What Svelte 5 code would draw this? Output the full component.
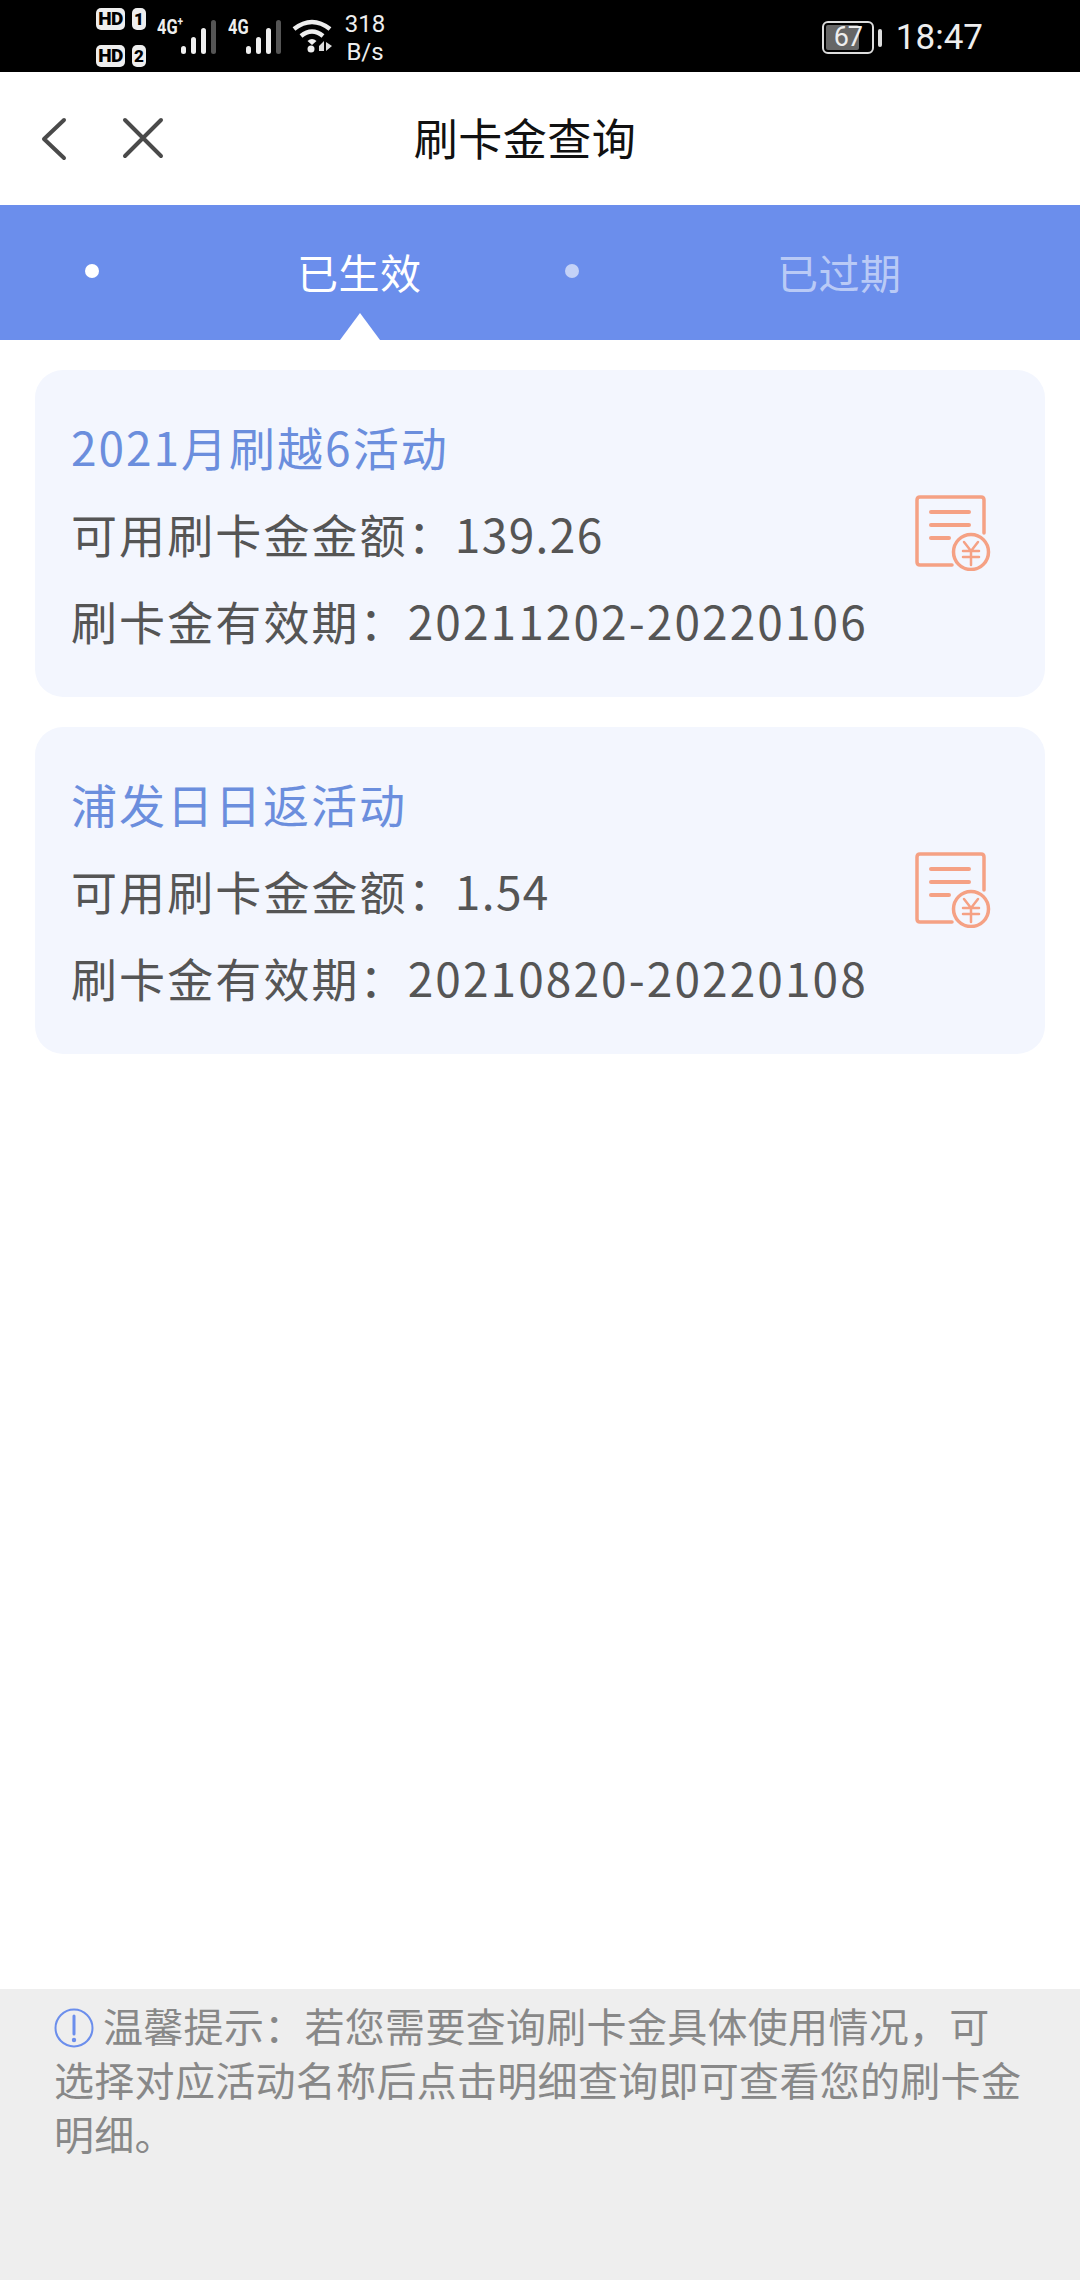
<script>
  const cards = [
    { title: '2021月刷越6活动', amount: '139.26', period: '20211202-20220106' },
    { title: '浦发日日返活动', amount: '1.54', period: '20210820-20220108' }
  ];
</script>

<div class="page">
  <div class="status">
    <div class="sims">
      <div class="sim"><span class="hd">HD</span><span class="num">1</span></div>
      <div class="sim"><span class="hd">HD</span><span class="num">2</span></div>
    </div>
    <span class="net first">4G<sup>+</sup></span>
    <svg class="signal" width="35" height="36" viewBox="0 0 35 36">
      <g fill="#eee">
        <rect x="0" y="26" width="5" height="8" rx="2.5" />
        <rect x="10" y="17" width="5" height="17" rx="2.5" />
        <rect x="20" y="8" width="5" height="26" rx="2.5" />
      </g>
      <rect x="30" y="0" width="5" height="34" rx="2.5" fill="#555" />
    </svg>
    <span class="net second">4G</span>
    <svg class="signal" width="35" height="36" viewBox="0 0 35 36">
      <g fill="#eee">
        <rect x="0" y="26" width="5" height="8" rx="2.5" />
        <rect x="10" y="17" width="5" height="17" rx="2.5" />
        <rect x="20" y="8" width="5" height="26" rx="2.5" />
      </g>
      <rect x="30" y="0" width="5" height="34" rx="2.5" fill="#555" />
    </svg>
    <svg class="wifi" width="41" height="36" viewBox="0 0 41 36">
      <g fill="none" stroke="#eee" stroke-width="4.5">
        <path d="M2 11 Q20 -3 38 11" />
        <path d="M9 18 Q20 9 31 18" />
      </g>
      <path d="M15.5 23 Q20 19 24.5 23 L20 27Z" fill="#eee" />
      <circle cx="19" cy="31" r="3.5" fill="#eee" />
      <path d="M27 33 L27 28 L32 23 L32 33Z M34 24 L40 28 L34 33Z" fill="#ddd" />
    </svg>
    <div class="speed"><span>318</span><span>B/s</span></div>
    <div class="right">
      <div class="battery"><div class="level"></div><span>67</span></div>
      <div class="nub"></div>
      <span class="time">18:47</span>
    </div>
  </div>

  <div class="nav">
    <svg class="icon back" width="30" height="44" viewBox="0 0 30 44">
      <path d="M24 3 L4 22 L24 41" fill="none" stroke="#4a4a4a" stroke-width="4" stroke-linecap="round" stroke-linejoin="round" />
    </svg>
    <svg class="icon close" width="42" height="44" viewBox="0 0 42 44">
      <path d="M3 3 L39 39 M39 3 L3 39" fill="none" stroke="#4a4a4a" stroke-width="4" stroke-linecap="round" />
    </svg>
    <div class="title">刷卡金查询</div>
  </div>

  <div class="tabs">
    <div class="tab active"><i></i><span>已生效</span></div>
    <div class="tab"><i></i><span>已过期</span></div>
    <div class="arrow"></div>
  </div>

  <div class="list">
    {#each cards as c}
      <div class="card">
        <div class="info">
          <div class="name">{c.title}</div>
          <div class="row">可用刷卡金金额：<span class="amount">{c.amount}</span></div>
          <div class="row">刷卡金有效期：{c.period}</div>
        </div>
        <svg class="bill" width="76" height="76" viewBox="0 0 76 76">
          <g fill="none" stroke="#f5a184" stroke-width="3.5" stroke-linecap="round" stroke-linejoin="round">
            <path d="M37 70 H5 Q2 70 2 67 V5 Q2 2 5 2 H66 Q69 2 69 5 V38" />
            <path d="M16 17 H54 M16 30 H54 M16 43 H34" stroke-width="4" />
            <circle cx="56" cy="57" r="17.5" />
            <path d="M49 47 L56 56 L63 47 M48 56 H64 M48 62 H64 M56 56 V70" stroke-width="2.5" />
          </g>
        </svg>
      </div>
    {/each}
  </div>

  <div class="tip">
    <p>
      <svg class="warn" width="40" height="40" viewBox="0 0 40 40">
        <circle cx="20" cy="20" r="18.5" fill="none" stroke="#6b8eec" stroke-width="2" />
        <path d="M20 8 V26" stroke="#6b8eec" stroke-width="3" stroke-linecap="round" />
        <circle cx="20" cy="32" r="2.2" fill="#6b8eec" />
      </svg>温馨提示：若您需要查询刷卡金具体使用情况，可选择对应活动名称后点击明细查询即可查看您的刷卡金明细。
    </p>
  </div>
</div>

<style>
  :global(body) {
    margin: 0;
    background: #fff;
  }

  .page {
    width: 1080px;
    height: 2280px;
    display: flex;
    flex-direction: column;
    font-family: "Noto Sans CJK SC", "Noto Sans", sans-serif;
    overflow: hidden;
  }

  .status {
    height: 72px;
    background: #000;
    color: #eee;
    display: flex;
    align-items: center;
    padding-left: 96px;
    box-sizing: border-box;
    font-family: Roboto, sans-serif;
  }

  .sims {
    display: flex;
    flex-direction: column;
    gap: 15px;
    width: 61px;
    margin-top: 3px;
  }

  .sim {
    display: flex;
    gap: 7px;
    height: 22px;
  }

  .hd, .num {
    background: #eee;
    color: #000;
    border-radius: 5px;
    font-size: 17px;
    font-weight: 900;
    line-height: 22px;
    text-align: center;
  }

  .hd {
    width: 29px;
    font-size: 19px;
    letter-spacing: -0.5px;
  }

  .num {
    width: 14px;
    font-size: 17px;
  }

  .net {
    font-size: 21px;
    font-weight: 700;
    line-height: 20px;
    align-self: flex-start;
    margin-top: 17px;
    width: 24px;
    white-space: nowrap;
    transform: scaleX(0.78);
    transform-origin: left;
  }

  .net sup {
    font-size: 13px;
    line-height: 0;
  }

  .second {
    margin-left: 12px;
    width: 18px;
  }

  .signal {
    align-self: flex-start;
    margin-top: 20px;
  }

  .wifi {
    align-self: flex-start;
    margin-top: 18px;
    margin-left: 11px;
  }

  .speed {
    display: flex;
    flex-direction: column;
    align-items: center;
    margin-left: 13px;
    margin-top: 4px;
    font-size: 24px;
    line-height: 28px;
    width: 38px;
  }

  .right {
    margin-left: auto;
    margin-right: 97px;
    margin-top: 3px;
    display: flex;
    align-items: center;
  }

  .battery {
    position: relative;
    width: 52px;
    height: 33px;
    box-sizing: border-box;
    border: 2.5px solid #ddd;
    border-radius: 6px;
    font-size: 27px;
    line-height: 28px;
    letter-spacing: -1px;
    text-align: center;
  }

  .battery span {
    position: relative;
  }

  .level {
    position: absolute;
    left: 2px;
    top: 2px;
    bottom: 2px;
    width: 33px;
    background: #666;
    border-radius: 2px;
  }

  .nub {
    width: 4px;
    height: 18px;
    margin-left: 4px;
    background: #ddd;
    border-radius: 2px;
  }

  .time {
    margin-left: 14px;
    font-size: 35px;
    white-space: nowrap;
  }

  .nav {
    position: relative;
    height: 133px;
    display: flex;
    align-items: center;
    background: #fff;
  }

  .icon {
    flex: none;
  }

  .back {
    margin-left: 40px;
  }

  .close {
    margin-left: 52px;
  }

  .title {
    position: absolute;
    left: 0;
    right: 30px;
    top: 30px;
    text-align: center;
    font-size: 44px;
    line-height: 70px;
    letter-spacing: 0.5px;
    color: #111;
  }

  .tabs {
    position: relative;
    height: 135px;
    display: flex;
    padding-left: 85px;
    background: #6b8eec;
  }

  .tab {
    width: 480px;
    flex: none;
    display: flex;
    align-items: center;
    color: rgba(255, 255, 255, 0.55);
    font-size: 41px;
    padding-bottom: 3px;
    box-sizing: border-box;
  }

  .tab span {
    letter-spacing: 0.5px;
    margin-left: -3px;
  }

  .tab i {
    width: 14px;
    height: 14px;
    margin-right: 201px;
    border-radius: 50%;
    background: rgba(255, 255, 255, 0.6);
  }

  .tab.active {
    color: #fff;
  }

  .tab.active i {
    background: #fff;
  }

  .arrow {
    position: absolute;
    left: 340px;
    bottom: 0;
    border-left: 20px solid transparent;
    border-right: 20px solid transparent;
    border-bottom: 27px solid #fff;
  }

  .list {
    flex: 1;
    display: flex;
    flex-direction: column;
    gap: 30px;
    padding: 30px 35px 0;
  }

  .card {
    height: 327px;
    box-sizing: border-box;
    padding: 32px 54px 0 36px;
    background: #f3f6fe;
    border-radius: 28px;
    display: flex;
  }

  .info {
    flex: 1;
  }

  .name {
    font-size: 46px;
    line-height: 88px;
    letter-spacing: 2px;
    color: #6b8edd;
  }

  .row {
    font-size: 46px;
    line-height: 87px;
    letter-spacing: 2.1px;
    color: #555;
  }

  .amount {
    letter-spacing: 1.4px;
    margin-left: -1px;
  }

  .bill {
    flex: none;
    margin-top: 93px;
  }

  .tip {
    height: 291px;
    box-sizing: border-box;
    padding: 0 56px 0 54px;
    background: #eee;
  }

  .tip p {
    margin: 0;
    font-size: 40px;
    letter-spacing: 0.3px;
    line-height: 54px;
    padding-top: 9px;
    color: #888;
  }

  .warn {
    vertical-align: -6px;
    margin-right: 9px;
  }
</style>
